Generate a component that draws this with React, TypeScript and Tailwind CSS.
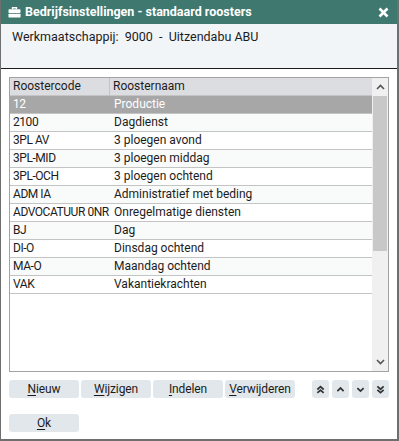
import React from "react";

const rows = [
  { code: "12", name: "Productie" },
  { code: "2100", name: "Dagdienst" },
  { code: "3PL AV", name: "3 ploegen avond" },
  { code: "3PL-MID", name: "3 ploegen middag" },
  { code: "3PL-OCH", name: "3 ploegen ochtend" },
  { code: "ADM IA", name: "Administratief met beding" },
  { code: "ADVOCATUUR 0NR", name: "Onregelmatige diensten" },
  { code: "BJ", name: "Dag" },
  { code: "DI-O", name: "Dinsdag ochtend" },
  { code: "MA-O", name: "Maandag ochtend" },
  { code: "VAK", name: "Vakantiekrachten" },
];

const font = { fontFamily: "Roboto, 'Noto Sans', sans-serif" };

function Chevron({ dir, double }: { dir: "up" | "down"; double?: boolean }) {
  const up = dir === "up";
  return (
    <svg width="9" height="9" viewBox="0 0 10 10" className="text-[#333]">
      {double ? (
        <>
          <path d={up ? "M1.5 5L5 1.8 8.5 5" : "M1.5 1.5L5 4.7 8.5 1.5"} fill="none" stroke="currentColor" strokeWidth="1.9" />
          <path d={up ? "M1.5 8.8L5 5.6 8.5 8.8" : "M1.5 5.3L5 8.5 8.5 5.3"} fill="none" stroke="currentColor" strokeWidth="1.9" />
        </>
      ) : (
        <path d={up ? "M1.5 6.8L5 3.4 8.5 6.8" : "M1.5 3.4L5 6.8 8.5 3.4"} fill="none" stroke="currentColor" strokeWidth="1.9" />
      )}
    </svg>
  );
}

function Btn({ label, hot }: { label: string; hot: string }) {
  const rest = label.slice(hot.length);
  return (
    <button className="h-[18px] w-[70px] rounded-[3px] bg-[#e2e7eb] text-[12px] leading-[18px] tracking-[-0.1px] text-[#1b1b1b]" style={font}>
      <span className="underline underline-offset-[2px]">{hot}</span>
      {rest}
    </button>
  );
}

export default function App() {
  return (
    <div className="flex h-[441px] w-[399px] flex-col border-b-2 border-l border-r-2 border-[#6f6f6f] bg-white" style={font}>
      <div className="flex h-[24px] shrink-0 items-center bg-[#3e786f] pl-[7px] pr-[8px] text-white">
        <svg width="13" height="11" viewBox="0 0 13 11" className="mr-[4px]">
          <path d="M4.5 2V0.8h4V2" fill="none" stroke="white" strokeWidth="1.4" />
          <rect x="0.5" y="2.3" width="12" height="3.6" rx="0.6" fill="white" />
          <rect x="0.5" y="6.7" width="12" height="3.8" rx="0.6" fill="white" />
        </svg>
        <span className="text-[12.5px] font-bold">Bedrijfsinstellingen - standaard roosters</span>
        <span className="ml-auto">
          <svg width="11" height="11" viewBox="0 0 11 11">
            <path d="M1.5 1.5l8 8M9.5 1.5l-8 8" stroke="white" strokeWidth="2.6" />
          </svg>
        </span>
      </div>

      <div className="h-[45px] shrink-0 border-b border-[#1c1c1c] bg-[#f2f5f8] pl-[11px] pt-[4px] text-[12.5px] text-[#1c1c1c]">
        Werkmaatschappij:&nbsp; 9000 &nbsp;-&nbsp; Uitzendabu ABU
      </div>

      <div className="flex flex-1 flex-col px-[8px] pt-[8px]">
        <div className="flex h-[295px] border border-[#a3a3a3]">
          <div className="flex-1">
            <div className="flex h-[18px] border-b border-[#c4c4c4] bg-[#dcdde1] text-[12px] leading-[17px] text-[#1c1c1c]">
              <div className="w-[100px] border-r border-[#c4c4c4] pl-[3px]">Roostercode</div>
              <div className="pl-[3px]">Roosternaam</div>
            </div>
            {rows.map((r, i) => (
              <div
                key={r.code}
                className={
                  "flex h-[18px] border-b border-[#c4c4c4] text-[12px] leading-[17px] " +
                  (i === 0 ? "bg-[#a7a7a7] text-white" : i % 2 === 1 ? "bg-[#f9fafa] text-[#1c1c1c]" : "bg-white text-[#1c1c1c]")
                }
              >
                <div className="w-[101px] whitespace-nowrap pl-[3px] tracking-[-0.45px]">{r.code}</div>
                <div className="whitespace-nowrap pl-[3px]">{r.name}</div>
              </div>
            ))}
          </div>
          <div className="flex w-[16px] flex-col bg-[#f0f0f0]">
            <div className="flex h-[18px] items-center justify-center">
              <svg width="9" height="6" viewBox="0 0 9 6">
                <path d="M1 5L4.5 1.5 8 5" fill="none" stroke="#555" strokeWidth="1.6" />
              </svg>
            </div>
            <div className="mx-auto h-[155px] w-[14px] bg-[#c8c8c8]" />
            <div className="flex-1" />
            <div className="flex h-[18px] items-center justify-center">
              <svg width="9" height="6" viewBox="0 0 9 6">
                <path d="M1 1L4.5 4.5 8 1" fill="none" stroke="#555" strokeWidth="1.6" />
              </svg>
            </div>
          </div>
        </div>

        <div className="mt-[8px] flex items-center">
          <div className="flex gap-[2px]">
            <Btn label="Nieuw" hot="N" />
            <Btn label="Wijzigen" hot="W" />
            <Btn label="Indelen" hot="I" />
            <Btn label="Verwijderen" hot="V" />
          </div>
          <div className="ml-auto flex gap-[3px]">
            <button className="flex h-[18px] w-[17px] items-center justify-center rounded-[3px] bg-[#e2e7eb]"><Chevron dir="up" double /></button>
            <button className="flex h-[18px] w-[17px] items-center justify-center rounded-[3px] bg-[#e2e7eb]"><Chevron dir="up" /></button>
            <button className="flex h-[18px] w-[17px] items-center justify-center rounded-[3px] bg-[#e2e7eb]"><Chevron dir="down" /></button>
            <button className="flex h-[18px] w-[17px] items-center justify-center rounded-[3px] bg-[#e2e7eb]"><Chevron dir="down" double /></button>
          </div>
        </div>

        <div className="mt-[12px]">
          <Btn label="Ok" hot="O" />
        </div>
      </div>
    </div>
  );
}
